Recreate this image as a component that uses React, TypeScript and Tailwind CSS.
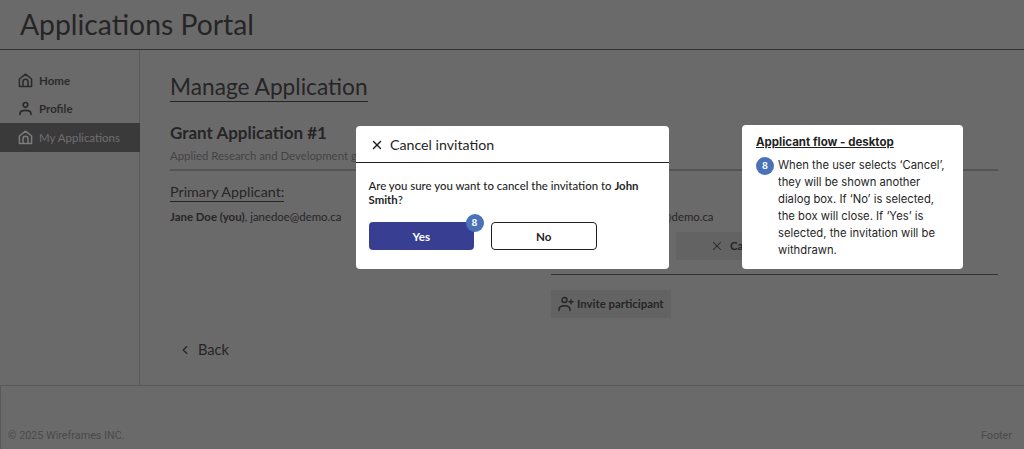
import { ChevronLeft, X } from "lucide-react";

const lato = "font-['Lato','Liberation_Sans',sans-serif]";

function HomeIcon({ className }: { className?: string }) {
  return (
    <svg width="15" height="15" viewBox="0 0 15 15" fill="none" stroke="currentColor" strokeWidth="1.5" strokeLinejoin="round" className={className}>
      <path d="M7.5 1.2 13.6 6v7.6H1.4V6z" />
      <path d="M5 13.6V8.8a2.5 2.5 0 0 1 5 0v4.8" />
    </svg>
  );
}

function PersonIcon() {
  return (
    <svg width="15" height="15" viewBox="0 0 15 15" fill="none" stroke="currentColor" strokeWidth="1.6" strokeLinecap="round">
      <circle cx="7.5" cy="3.8" r="2.3" />
      <path d="M2 13.4v-.7c0-2 1.8-3.3 5.5-3.3s5.5 1.3 5.5 3.3v.7" />
    </svg>
  );
}

function InviteIcon() {
  return (
    <svg width="16" height="16" viewBox="0 0 16 16" fill="none" stroke="currentColor" strokeWidth="1.4" strokeLinecap="round">
      <circle cx="6.5" cy="4" r="2.5" />
      <path d="M1 14.5v-1c0-2.300 2.200-3.800 5.500-3.800s5.500 1.500 5.500 3.800v1" />
      <path d="M13 3.700v4M11 5.700h4" />
    </svg>
  );
}

function NavItem({ label, icon, active }: { label: string; icon: React.ReactNode; active?: boolean }) {
  return (
    <div className={`flex h-[28.5px] items-center gap-[6px] pl-[18px] text-[11.5px] ${active ? "mr-[-1px] bg-[#3b3a3b] text-[#706f70]" : "font-bold text-[#2b2a2b]"}`}>
      {icon}
      <span>{label}</span>
    </div>
  );
}

function Badge({ className }: { className?: string }) {
  return (
    <span className={`flex h-[18px] w-[18px] shrink-0 items-center justify-center rounded-full bg-[#4a72b8] font-['Inter',sans-serif] text-[9px] font-bold text-white ${className ?? ""}`}>
      8
    </span>
  );
}

export default function App() {
  return (
    <div className={`relative flex h-[449px] w-[1024px] flex-col overflow-hidden bg-[#6b6a6b] text-[#262526] ${lato}`}>
      <header className="h-[50px] shrink-0 border-b border-[#333233] pl-[20px]">
        <h1 className="text-[28.3px] leading-[49px]">Applications Portal</h1>
      </header>

      <div className="flex min-h-0 flex-1">
        <aside className="w-[140px] shrink-0 border-r border-[#5a595a] pt-[16px]">
          <NavItem label="Home" icon={<HomeIcon />} />
          <NavItem label="Profile" icon={<PersonIcon />} />
          <NavItem label="My Applications" active icon={<HomeIcon className="text-[#7d7c7d]" />} />
        </aside>

        <main className="flex-1 pl-[30px] pr-[26px] pt-[23px]">
          <h2 className="inline-block border-b border-[#262526] text-[22.7px] leading-[28px]">Manage Application</h2>
          <h3 className="mt-[19px] text-[17px] font-bold leading-[24px]">Grant Application #1</h3>
          <p className="mt-[3px] border-b-2 border-[#555455] pb-[6px] text-[11.4px] leading-[15px] text-[#444344]">
            Applied Research and Development grant
          </p>

          <div className="mt-[12px] flex">
            <section className="w-[381px] shrink-0">
              <h4 className="w-fit border-b border-[#262526] text-[14.3px] leading-[18px]">Primary Applicant:</h4>
              <p className="mt-[7px] text-[11.4px] leading-[16px]">
                <b>Jane Doe (you)</b>, janedoe@demo.ca
              </p>
            </section>
            <section className="flex-1">
              <h4 className="h-[19px] text-[14.3px] leading-[18px]">Participants:</h4>
              <p className="mt-[7px] text-[11.4px] leading-[16px]">
                <b>John Smith</b>, johnsmith@demo.ca
              </p>
              <div className="h-[50px] border-b border-[#333233]" />
              <button className="mt-[15px] flex h-[28px] items-center gap-[3px] bg-[#646364] pl-[7px] pr-[7px] text-[11.4px] font-bold">
                <InviteIcon />
                Invite participant
              </button>
            </section>
          </div>

          <div className="mt-[21px] flex items-center gap-[6px] pl-[8px] text-[14.6px]">
            <ChevronLeft size={14} strokeWidth={2} />
            Back
          </div>
        </main>
      </div>

      <footer className="flex h-[64px] shrink-0 items-end justify-between border-l border-t border-[#5a595a] pb-[5px] pl-[7px] pr-[12px] font-['Roboto',sans-serif] text-[10.8px] text-[#4a494a]">
        <span>© 2025 Wireframes INC.</span>
        <span>Footer</span>
      </footer>

      {/* cancel button behind the dialogs */}
      <div className="absolute left-[676px] top-[232px] flex h-[28px] w-[90px] items-center gap-[6px] bg-[#646364] pl-[34px] text-[11.4px] font-bold">
        <X size={14} strokeWidth={1.8} className="shrink-0" />
        Cancel
      </div>

      {/* confirm dialog */}
      <div className="absolute left-[355.5px] top-[126px] h-[143px] w-[313.5px] rounded-[4px] bg-white text-[#1f1f1f]">
        <div className="flex h-[37px] items-center gap-[6.5px] border-b border-[#1f1f1f] pl-[14px] pt-[2px] text-[14.2px]">
          <X size={14} strokeWidth={2.4} />
          Cancel invitation
        </div>
        <p className="px-[13px] pt-[16px] text-[11.4px] font-medium leading-[13.5px]">
          Are you sure you want to cancel the invitation to <b>John Smith</b>?
        </p>
        <div className="relative mt-[16px] flex gap-[17px] pl-[13px]">
          <button className="h-[28px] w-[105.5px] rounded-[4px] bg-[#383f92] pt-[2px] text-[11.6px] font-bold text-white">Yes</button>
          <button className="h-[28px] w-[105.5px] rounded-[4px] border border-[#1f1f1f] pt-[2px] text-[11.6px] font-bold">No</button>
          <Badge className="absolute left-[110px] top-[-8px]" />
        </div>
      </div>

      {/* annotation card */}
      <div className="absolute left-[742px] top-[125px] h-[144px] w-[221px] rounded-[4px] bg-white pl-[14px] pt-[10px] font-['Inter',sans-serif] text-[#1f1f1f]">
        <h5 className="text-[11.5px] font-bold leading-[15px] underline">Applicant flow - desktop</h5>
        <div className="mt-[7px] flex gap-[4px]">
          <Badge />
          <p className="w-[172px] text-[11.25px] leading-[17px]">
            When the user selects ‘Cancel’, they will be shown another dialog box. If ‘No’ is selected, the box will close. If ‘Yes’ is selected, the invitation will be withdrawn.
          </p>
        </div>
      </div>
    </div>
  );
}
